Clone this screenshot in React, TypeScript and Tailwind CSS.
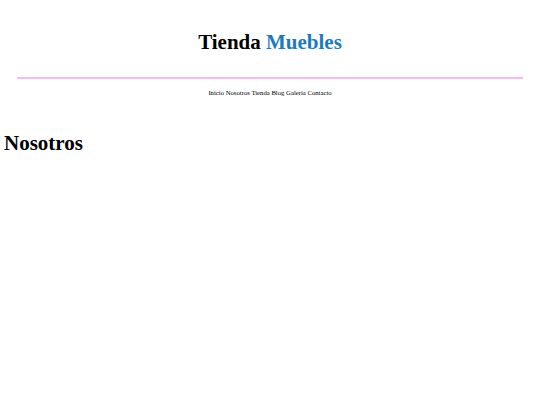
export default function App() {
  return (
    <div className="min-h-[405px] bg-white text-black" style={{ fontFamily: '"Liberation Serif", "Times New Roman", serif' }}>
      <header className="pt-[29px] text-center">
        <h1 className="text-[21px] font-bold leading-[26px]">
          Tienda <span className="text-[#1a7cbf]">Muebles</span>
        </h1>
      </header>
      <div className="mx-[17px] mt-[22px] h-[2px] bg-[#ee82ee] opacity-55" />
      <nav className="mt-[10px] text-center text-[6.7px] leading-[8px]">
        <a>Inicio</a> <a>Nosotros</a> <a>Tienda</a> <a>Blog</a> <a>Galeria</a> <a>Contacto</a>
      </nav>
      <main className="mt-[33px] px-1">
        <h2 className="text-[21px] font-bold leading-[26px]">Nosotros</h2>
      </main>
    </div>
  );
}
